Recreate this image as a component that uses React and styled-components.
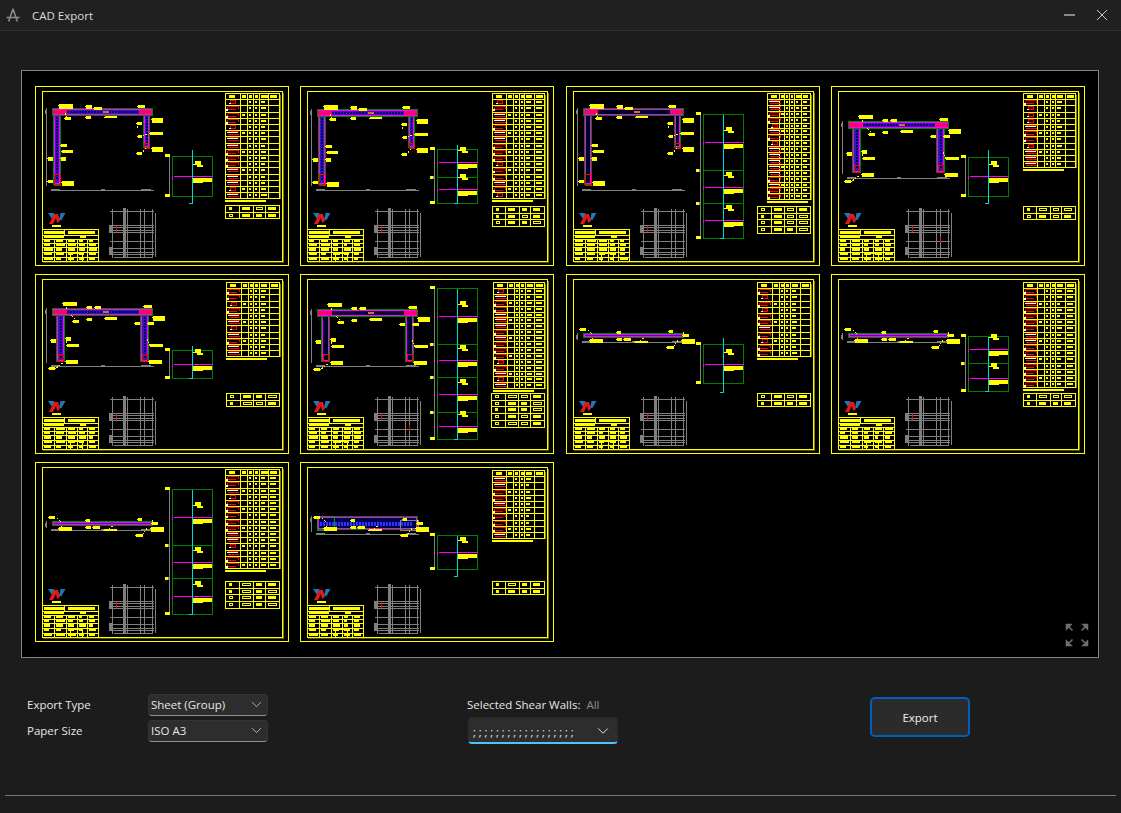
import React from "react";
import styled, { createGlobalStyle } from "styled-components";
import { ChevronDown } from "lucide-react";

const YELLOW = "#ffff00";
const GREEN = "#008000";
const MAGENTA = "#ff00ff";
const CYAN = "#00d8d8";
const RED = "#ff0000";
const GREY = "#808080";

// annotation blobs around the wall plan, [x, y, w, h] in sheet units
const NOTES = {
  L: [
    [24, 18, 14, 4], [51, 19, 6, 3], [59, 21, 8, 2], [103, 19, 7, 2], [117, 32, 11, 4],
    [102, 36, 5, 2], [115, 46, 13, 2], [103, 49, 4, 2], [117, 61, 11, 4], [102, 66, 5, 2],
    [26, 58, 6, 2], [27, 64, 11, 2], [13, 71, 5, 3], [26, 71, 5, 3], [27, 95, 12, 4],
    [13, 94, 5, 2], [30, 31, 6, 2], [51, 30, 5, 2], [70, 30, 12, 1],
  ],
  U: [
    [28, 29, 14, 3], [52, 33, 5, 2], [60, 33, 6, 2], [109, 32, 8, 2], [118, 43, 12, 4],
    [38, 47, 6, 2], [52, 45, 5, 2], [70, 44, 12, 2], [100, 49, 5, 2], [113, 49, 6, 2],
    [16, 66, 5, 3], [31, 64, 5, 3], [32, 71, 12, 2], [115, 71, 13, 2], [31, 87, 12, 3],
    [114, 87, 13, 3], [14, 94, 6, 2],
  ],
  flat: [
    [14, 54, 6, 2], [51, 57, 4, 2], [103, 56, 4, 2], [117, 60, 6, 2], [24, 65, 13, 3],
    [51, 64, 5, 2], [58, 64, 7, 2], [69, 67, 13, 1], [116, 65, 13, 4], [101, 72, 7, 2],
  ],
};

// leader lines from the wall to its notes
const LEADERS = {
  L: ["M105 38 L102 42", "M112 48 L108 50", "M111 62 L107 67", "M30 27 L33 33"],
  U: ["M34 32 L30 37", "M40 46 L36 42", "M28 90 L20 96", "M34 66 L31 70", "M112 66 L115 72"],
  flat: ["M22 56 L26 60", "M112 66 L108 72", "M26 64 L30 68", "M78 64 L74 67", "M118 58 L116 62"],
};

const SHEETS = [
  { plan: "L", planY: 22, legBottom: 99, shortBottom: 62, base: 104, elev: { top: 70, bottom: 110, floors: [], mags: [90], cyan: [63, 117] }, table: { x0: 190, y0: 7, rows: 17 }, small: { x0: 190, y0: 119, rows: 2 }, seed: 11 },
  { plan: "L", planY: 23, legBottom: 99, shortBottom: 62, base: 104, elev: { top: 63, bottom: 117, floors: [91], mags: [76, 103], cyan: [58, 117] }, table: { x0: 192, y0: 7, rows: 17, last: true }, small: { x0: 192, y0: 120, rows: 3 }, seed: 23 },
  { plan: "L", planY: 22, hollow: true, legBottom: 99, shortBottom: 62, base: 104, elev: { top: 28, bottom: 152, floors: [84, 117], mags: [56, 101, 134], cyan: [28, 152] }, table: { x0: 201, y0: 7, rows: 18, rowH: 5.9, last: true }, small: { x0: 191, y0: 120, rows: 4 }, seed: 37 },
  { plan: "U", planY: 35, legBottom: 87, base: 92, elev: { top: 71, bottom: 110, floors: [], mags: [90], cyan: [63, 117] }, table: { x0: 192, y0: 7, rows: 12 }, small: { x0: 192, y0: 120, rows: 2 }, seed: 41, mark: true },
  { plan: "U", planY: 34, legBottom: 88, base: 92, elev: { top: 76, bottom: 104, floors: [], mags: [90], cyan: [71, 104] }, table: { x0: 191, y0: 8, rows: 12 }, small: { x0: 191, y0: 119, rows: 2 }, seed: 53 },
  { plan: "U", planY: 35, hollow: true, legBottom: 88, base: 92, elev: { top: 14, bottom: 165, floors: [70, 103, 138], mags: [42, 86, 120, 152], cyan: [14, 165] }, table: { x0: 193, y0: 8, rows: 18, rowH: 5.9, last: true }, small: { x0: 191, y0: 119, rows: 5 }, seed: 67, mark: true },
  { plan: "flat", planY: 59, planH: 5, base: 68, elev: { top: 70, bottom: 109, floors: [], mags: [90], cyan: [63, 118] }, table: { x0: 191, y0: 8, rows: 12 }, small: { x0: 191, y0: 119, rows: 2 }, seed: 71 },
  { plan: "flat", planY: 59, planH: 5, base: 68, elev: { top: 62, bottom: 117, floors: [89], mags: [75, 104], cyan: [62, 117] }, table: { x0: 192, y0: 8, rows: 17, last: true }, small: { x0: 192, y0: 119, rows: 2 }, seed: 83 },
  { plan: "flat", planY: 59, planH: 5, base: 68, elev: { top: 27, bottom: 152, floors: [83, 116], mags: [55, 100, 134], cyan: [27, 152] }, table: { x0: 190, y0: 7, rows: 16, last: true }, small: { x0: 190, y0: 119, rows: 4 }, seed: 97 },
  { plan: "flat", planY: 54, planH: 14, dark: true, base: 72, elev: { top: 73, bottom: 107, floors: [], mags: [90], cyan: [73, 114] }, table: { x0: 192, y0: 8, rows: 11 }, small: { x0: 192, y0: 119, rows: 2 }, seed: 101 },
];

const makeRng = (seed) => {
  let s = seed * 7919 + 17;
  return () => {
    s = (s * 16807) % 2147483647;
    return (s % 1000) / 1000;
  };
};

const px = (v) => Math.round(v) + 0.5;

const Line = ({ x1, y1, x2, y2, c = YELLOW }) => (
  <line x1={px(x1)} y1={px(y1)} x2={px(x2)} y2={px(y2)} stroke={c} />
);

const Blob = ({ x, y, w, h, c = YELLOW }) => (
  <rect x={Math.round(x)} y={Math.round(y)} width={Math.round(w)} height={Math.round(h)} fill={c} />
);

const Box = ({ x, y, w, h, c = YELLOW, fill = "none" }) => (
  <rect x={px(x)} y={px(y)} width={Math.round(w)} height={Math.round(h)} stroke={c} fill={fill} />
);

const Logo = () => (
  <g shapeRendering="auto">
    <polygon points="13,127 19,127 21,132 17,133" fill="#1c78b8" />
    <polygon points="25.5,127 30.5,127 26.5,134 24,134" fill="#1c78b8" />
    <polygon points="14,138 19,128 23,128 25,135 22,137 21,132 18,138" fill="#e01818" />
    <Blob x={17} y={139} w={9} h={2} />
  </g>
);

const TitleBlock = ({ rng }) => {
  const ys = [143, 149, 153, 157, 161, 166, 171, 175];
  const xs = [7, 19, 31, 42, 52, 63];
  return (
    <g>
      <Box x={7} y={143} w={56} h={32} />
      {ys.slice(1, -1).map((y) => (
        <Line key={y} x1={7} y1={y} x2={63} y2={y} />
      ))}
      {xs.slice(1, -1).map((x) => (
        <Line key={x} x1={x} y1={153} x2={x} y2={175} />
      ))}
      <Line x1={29} y1={143} x2={29} y2={149} />
      <Blob x={9} y={145} w={21} h={3} />
      <Blob x={33} y={145} w={27} h={3} />
      <Blob x={9} y={150} w={20} h={2} />
      <Blob x={45} y={150} w={6} h={2} />
      {ys.slice(2, -1).map((y, r) =>
        xs.slice(0, -1).map((x, i) => (
          <Blob key={`${x}-${y}`} x={x + 2} y={y + 1} w={xs[i + 1] - x - 3 - rng() * 4} h={r === 2 ? 3 : 2} />
        ))
      )}
      <Box x={35} y={167} w={12} h={8} />
    </g>
  );
};

const SteelGrid = ({ mark }) => {
  const vs = [77, 92, 105, 109, 117];
  const hs = [125, 139, 141, 144, 146, 155, 162, 166, 168];
  return (
    <g>
      {vs.map((x) => (
        <Line key={x} x1={x} y1={122} x2={x} y2={171} c={GREY} />
      ))}
      <Blob x={88} y={122} w={3} h={49} c={GREY} />
      <Line x1={120} y1={126} x2={120} y2={170} c={GREY} />
      {hs.map((y) => (
        <Line key={y} x1={74} y1={y} x2={118} y2={y} c={GREY} />
      ))}
      <Blob x={74} y={139} w={3} h={8} c={GREY} />
      <Blob x={74} y={161} w={3} h={8} c={GREY} />
      <Line x1={78} y1={171} x2={116} y2={171} c={GREY} />
      <Line x1={81} y1={139} x2={81} y2={145} c={RED} />
      {mark && <Line x1={109} y1={150} x2={109} y2={156} c={RED} />}
    </g>
  );
};

const wallFill = (s) => (s.hollow ? "#000030" : s.dark ? "#000050" : "#3a14b8");

const WallBar = ({ x, y, w, h, s, horizontal }) => {
  const dots = horizontal ? Math.floor((w - 6) / 3) : Math.floor((h - 6) / 3);
  return (
    <g>
      <Blob x={x} y={y} w={w} h={h} c={GREEN} />
      <Blob x={x + 1} y={y + 1} w={w - 2} h={h - 2} c={MAGENTA} />
      {h > 4 && w > 4 && <Blob x={x + 2} y={y + 2} w={w - 4} h={h - 4} c={wallFill(s)} />}
      {!s.hollow &&
        h > 5 &&
        Array.from({ length: dots }, (_, i) =>
          horizontal ? (
            <Blob key={i} x={x + 3 + i * 3} y={y + h / 2 - 1} w={2} h={s.dark ? 4 : 2} c={s.dark ? "#3030ff" : "#000070"} />
          ) : (
            <Blob key={i} x={x + w / 2 - 1} y={y + 3 + i * 3} w={2} h={2} c="#000070" />
          )
        )}
    </g>
  );
};

const Plan = ({ s }) => {
  const top = s.planY;
  const h = s.planH || 8;
  const dimBottom = s.plan === "flat" ? top + h + 1 : s.legBottom;
  const dy = s.plan === "flat" ? 0 : s.plan === "L" ? top - 22 : top - 35;
  return (
    <g>
      <Line x1={11} y1={top - 1} x2={11} y2={dimBottom} c={GREY} />
      <Blob x={10} y={top + 2} w={2} h={4} c={GREY} />
      <Line x1={15} y1={s.base} x2={118} y2={s.base} c={GREY} />
      <Blob x={16} y={s.base - 1} w={9} h={1} c={GREY} />
      <Blob x={66} y={s.base - 1} w={4} h={1} c={GREY} />
      <Blob x={106} y={s.base - 1} w={10} h={1} c={GREY} />
      {s.plan === "L" && (
        <>
          <WallBar x={18} y={top + 6} w={8} h={s.legBottom - top - 6} s={s} />
          <WallBar x={108} y={top + 6} w={7} h={s.shortBottom - top - 6} s={s} />
          <Box x={19} y={s.legBottom - 11} w={6} h={11} c={RED} />
          <Box x={109} y={s.shortBottom - 5} w={5} h={5} c={RED} />
        </>
      )}
      {s.plan === "U" && (
        <>
          <WallBar x={21} y={top + 6} w={9} h={s.legBottom - top - 6} s={s} />
          <WallBar x={105} y={top + 6} w={9} h={s.legBottom - top - 6} s={s} />
          <Box x={23} y={s.legBottom - 8} w={5} h={7} c={RED} />
          <Box x={107} y={s.legBottom - 8} w={5} h={7} c={RED} />
        </>
      )}
      <WallBar x={17} y={top} w={101} h={h} s={s} horizontal />
      {s.plan !== "flat" && (
        <>
          <Blob x={18} y={top + 2} w={14} h={4} c="#ff0070" />
          <Blob x={104} y={top + 2} w={13} h={4} c="#ff0070" />
          <Blob x={68} y={top + 3} w={6} h={2} c="#d07030" />
        </>
      )}
      {s.dark && (
        <>
          <Box x={17} y={top} w={17} h={h} c="#00a000" />
          <Box x={100} y={top + 4} w={18} h={h - 4} c={GREY} />
        </>
      )}
      {NOTES[s.plan].map(([x, y, w, n], i) => (
        <g key={i}>
          <Blob x={x} y={y + dy} w={w} h={n + 1} />
          <Blob x={x - 1} y={y + dy + 1} w={2} h={1} />
        </g>
      ))}
      <g transform={`translate(0 ${dy})`} fill="none" stroke={YELLOW} strokeDasharray="2 1">
        {LEADERS[s.plan].map((d) => (
          <path key={d} d={d} />
        ))}
      </g>
    </g>
  );
};

const Elevation = ({ e }) => {
  const x0 = 137;
  const x1 = 177;
  const cx = 157;
  return (
    <g>
      <Line x1={x0 - 3} y1={e.top} x2={x0 - 3} y2={e.bottom} c={GREY} />
      <Blob x={x0 - 7} y={e.top - 2} w={5} h={3} />
      <Blob x={x0 - 7} y={e.bottom - 2} w={5} h={3} />
      <Box x={x0} y={e.top} w={x1 - x0} h={e.bottom - e.top} c={GREEN} />
      {e.floors.map((y) => (
        <React.Fragment key={y}>
          <Line x1={x0} y1={y} x2={x1} y2={y} c={GREEN} />
          <Blob x={x0 - 7} y={y - 1} w={4} h={3} />
          <Blob x={x0 - 4} y={y - 1} w={2} h={3} c={GREY} />
        </React.Fragment>
      ))}
      {e.mags.map((y) => (
        <React.Fragment key={y}>
          <Line x1={x0 + 1} y1={y} x2={x1} y2={y} c={MAGENTA} />
          <Blob x={x0} y={y} w={1} h={3} c={MAGENTA} />
          <Blob x={cx + 1} y={y + 2} w={19} h={4} />
          <Blob x={cx + 1} y={y + 6} w={10} h={1} />
          <Blob x={cx + 3} y={y - 15} w={6} h={4} />
          <Blob x={cx + 5} y={y - 11} w={6} h={2} />
          <Blob x={cx + 1} y={y - 12} w={2} h={1} />
        </React.Fragment>
      ))}
      <Line x1={cx} y1={e.cyan[0]} x2={cx} y2={e.cyan[1]} c={CYAN} />
      <Line x1={cx - 4} y1={e.cyan[1]} x2={cx} y2={e.cyan[1]} c={CYAN} />
    </g>
  );
};

const COLS = [0, 0.28, 0.41, 0.52, 0.63, 0.81, 1];

const WallGlyph = ({ x, y, kind }) => {
  if (kind < 0.5) {
    return (
      <>
        <Line x1={x + 2} y1={y + 1} x2={x + 13} y2={y + 1} c={RED} />
        <Line x1={x + 2} y1={y + 4} x2={x + 10} y2={y + 4} c={RED} />
        <Line x1={x + 13} y1={y + 1} x2={x + 13} y2={y + 3} c={RED} />
        <Line x1={x + 2} y1={y + 1} x2={x + 2} y2={y + 3} c={RED} />
        <Blob x={x + 1} y={y + 4} w={2} h={2} c="#fff" />
      </>
    );
  }
  if (kind < 0.72) {
    return (
      <>
        <Box x={x + 5} y={y + 1} w={5} h={3} c={RED} />
        <Blob x={x + 4} y={y + 4} w={2} h={1} c="#fff" />
      </>
    );
  }
  return (
    <>
      <Line x1={x + 2} y1={y + 1} x2={x + 13} y2={y + 1} c={RED} />
      <Blob x={x + 2} y={y + 2} w={11} h={1} c="#fff" />
      <Line x1={x + 2} y1={y + 4} x2={x + 13} y2={y + 4} c={RED} />
    </>
  );
};

const Schedule = ({ t, rng }) => {
  const rowH = t.rowH || 6.2;
  const x1 = 243.5;
  const w = x1 - t.x0;
  const colX = COLS.map((c) => t.x0 + c * w);
  const bottom = t.y0 + t.rows * rowH;
  return (
    <g>
      <Line x1={x1 + 1} y1={t.y0 + 1} x2={x1 + 1} y2={bottom} c="#808000" />
      <Box x={t.x0} y={t.y0} w={w} h={bottom - t.y0} />
      {Array.from({ length: t.rows - 1 }, (_, i) => (
        <Line key={i} x1={t.x0} y1={t.y0 + (i + 1) * rowH} x2={x1} y2={t.y0 + (i + 1) * rowH} />
      ))}
      {colX.slice(1, -1).map((x) => (
        <Line key={x} x1={x} y1={t.y0} x2={x} y2={bottom} />
      ))}
      <Blob x={t.x0 + 4} y={t.y0 + 2} w={6} h={3} />
      {colX.slice(1, -1).map((x, i) => (
        <Blob key={x} x={x + 2} y={t.y0 + 2} w={colX[i + 2] - x - 3} h={3} />
      ))}
      {Array.from({ length: t.rows - 1 }, (_, r) => {
        const y = Math.round(t.y0 + (r + 1) * rowH);
        return (
          <g key={r}>
            <WallGlyph x={t.x0} y={y} kind={rng()} />
            {colX.slice(2, 5).map((x, i) => (
              <Blob key={i} x={x + 2} y={y + 2} w={Math.max(2, colX[i + 3] - x - 4 - rng() * 2)} h={2} />
            ))}
            {t.last && <Blob x={colX[5] + 2} y={y + 2} w={colX[6] - colX[5] - 4} h={2} />}
            {r % 3 === 2 && <Blob x={colX[1] + 2} y={y + 2} w={3} h={2} />}
          </g>
        );
      })}
      <Blob x={t.x0} y={bottom + 2} w={41} h={2} />
    </g>
  );
};

const SmallTable = ({ t, rng }) => {
  const w = 243.5 - t.x0;
  const rowH = 6.7;
  const xs = [0, 0.26, 0.52, 0.74, 1].map((c) => t.x0 + c * w);
  return (
    <g>
      <Box x={t.x0} y={t.y0} w={w} h={t.rows * rowH} />
      {Array.from({ length: t.rows - 1 }, (_, i) => (
        <Line key={i} x1={t.x0} y1={t.y0 + (i + 1) * rowH} x2={243.5} y2={t.y0 + (i + 1) * rowH} />
      ))}
      {xs.slice(1, -1).map((x) => (
        <Line key={x} x1={x} y1={t.y0} x2={x} y2={t.y0 + t.rows * rowH} />
      ))}
      {Array.from({ length: t.rows }, (_, r) =>
        xs.slice(0, -1).map((x, i) => {
          const cw = i === 0 ? 3 : xs[i + 1] - x - 6;
          const cellX = x + (i === 0 ? 4 : 3);
          const cellY = t.y0 + r * rowH + 2;
          return rng() < 0.5 ? (
            <Box key={`${r}-${i}`} x={cellX} y={cellY} w={cw} h={2} />
          ) : (
            <Blob key={`${r}-${i}`} x={cellX} y={cellY} w={cw} h={3} />
          );
        })
      )}
    </g>
  );
};

const Sheet = ({ s }) => {
  const rng = makeRng(s.seed);
  return (
    <SheetSvg viewBox="0 0 254 180" shapeRendering="crispEdges">
      <Line x1={248} y1={6} x2={248} y2={176} c="#808000" />
      <Line x1={7} y1={176} x2={248} y2={176} c="#505000" />
      <Box x={0} y={0} w={253} h={179} />
      <Box x={7} y={5} w={240} h={170} />
      <Plan s={s} />
      <Elevation e={s.elev} />
      <Schedule t={s.table} rng={rng} />
      <SmallTable t={s.small} rng={rng} />
      <Logo />
      <TitleBlock rng={rng} />
      <SteelGrid mark={s.mark} />
    </SheetSvg>
  );
};

const FitIcon = () => (
  <ExpandIcon viewBox="0 0 24 24" fill="#707070" stroke="#707070" strokeWidth="1.5">
    <path d="M1.5 1.5h4.5L1.5 6z M2 2l5.5 5.5" />
    <path d="M22.5 1.5H18l4.5 4.5z M22 2l-5.5 5.5" />
    <path d="M1.5 22.5H6l-4.5-4.5z M2 22l5.5-5.5" />
    <path d="M22.5 22.5H18l4.5-4.5z M22 22l-5.5-5.5" />
  </ExpandIcon>
);

const AppIcon = () => (
  <IconSvg viewBox="0 0 14 14" fill="none" stroke="#8c8c8c" strokeWidth="1.5">
    <path d="M7 0.5v2.5M6.3 3 2.6 13.5M7.7 3l3.7 10.5M0.5 9.5h13" />
    <circle cx="7" cy="3" r="1.4" fill="#8c8c8c" stroke="none" />
  </IconSvg>
);

const App = () => {
  return (
    <Page>
      <GlobalStyle />
      <TitleBar>
        <AppIcon />
        <Title>CAD Export</Title>
        <WindowButtons>
          <svg width="11" height="2" viewBox="0 0 11 2">
            <path d="M0 1h11" stroke="#f0f0f0" />
          </svg>
          <svg width="12" height="12" viewBox="0 0 12 12">
            <path d="M1 1l10 10M11 1L1 11" stroke="#c8c8c8" />
          </svg>
        </WindowButtons>
      </TitleBar>

      <Canvas>
        <SheetGrid>
          {SHEETS.map((s) => (
            <Sheet key={s.seed} s={s} />
          ))}
        </SheetGrid>
        <FitIcon />
      </Canvas>

      <Footer>
        <Fields>
          <Label>Export Type</Label>
          <Select>
            <span>Sheet (Group)</span>
            <ChevronDown size={17} strokeWidth={1} />
          </Select>
          <Label>Paper Size</Label>
          <Select>
            <span>ISO A3</span>
            <ChevronDown size={17} strokeWidth={1} />
          </Select>
        </Fields>
        <WallsGroup>
          <WallsHead>
            <Label>Selected Shear Walls:</Label>
            <Muted>All</Muted>
          </WallsHead>
          <WallSelect>
            <span>{"; ".repeat(18)}</span>
            <ChevronDown size={18} strokeWidth={1.3} />
          </WallSelect>
        </WallsGroup>
        <ExportButton>Export</ExportButton>
      </Footer>

      <Divider />
    </Page>
  );
};

const GlobalStyle = createGlobalStyle`
  html, body {
    margin: 0;
    padding: 0;
    background: #1c1c1c;
  }
  * {
    box-sizing: border-box;
  }
`;

const Page = styled.div`
  width: 1121px;
  height: 813px;
  display: flex;
  flex-direction: column;
  overflow: hidden;
  background: #1c1c1c;
  color: #e6e6e6;
  font-family: "Open Sans", "Noto Sans", sans-serif;
  font-size: 11.5px;
`;

const TitleBar = styled.div`
  height: 31px;
  flex: none;
  display: flex;
  align-items: center;
  padding: 0 13px 0 6px;
  background: #202020;
  border-bottom: 1px solid #303030;
`;

const IconSvg = styled.svg`
  width: 14px;
  height: 14px;
`;

const Title = styled.div`
  margin-left: 12px;
  color: #dcdcdc;
`;

const WindowButtons = styled.div`
  margin-left: auto;
  display: flex;
  align-items: center;
  gap: 21px;
`;

const Canvas = styled.div`
  position: relative;
  flex: none;
  height: 588px;
  margin: 39px 22px 0 21px;
  padding: 15px 13px;
  background: #000;
  border: 1px solid #858585;
`;

const SheetGrid = styled.div`
  display: grid;
  grid-template-columns: 265px 266px 265px 254px;
  grid-auto-rows: 180px;
  row-gap: 8px;
`;

const SheetSvg = styled.svg`
  display: block;
  width: 254px;
  height: 180px;
`;

const ExpandIcon = styled.svg`
  position: absolute;
  right: 9px;
  bottom: 10px;
  width: 24px;
  height: 24px;
`;

const Footer = styled.div`
  flex: none;
  display: flex;
  align-items: flex-start;
  margin-top: 36px;
  padding-left: 27px;
`;

const Fields = styled.div`
  display: grid;
  grid-template-columns: 121px 120px;
  grid-auto-rows: 22px;
  row-gap: 4px;
  align-items: center;
`;

const Label = styled.div`
  color: #e6e6e6;
  white-space: nowrap;
  padding-bottom: 1px;
`;

const Muted = styled.div`
  color: #8c8c8c;
  padding-bottom: 1px;
`;

const Select = styled.div`
  height: 22px;
  display: flex;
  align-items: center;
  justify-content: space-between;
  padding: 0 2px 1px 2px;
  background: #2d2d2d;
  border: 1px solid #333;
  border-bottom-color: #8f8f8f;
  border-radius: 4px;
  color: #e6e6e6;
`;

const WallsGroup = styled.div`
  width: 151px;
  margin-left: 199px;
  display: flex;
  flex-direction: column;
  gap: 1px;
`;

const WallsHead = styled.div`
  height: 22px;
  display: flex;
  align-items: center;
  gap: 6px;
`;

const WallSelect = styled(Select)`
  height: 27px;
  margin-left: 1px;
  padding: 2px 5px 0 4px;
  border-color: #2a2a2a;
  border-bottom: 2px solid #4cc2ff;
  font-size: 11px;
  white-space: pre;
  overflow: hidden;
`;

const ExportButton = styled.button`
  width: 100px;
  height: 40px;
  margin: 3px 0 0 252px;
  background: #2b2b2b;
  border: 2px solid #0060b8;
  border-radius: 5px;
  color: #f0f0f0;
  font: inherit;
`;

const Divider = styled.div`
  height: 1px;
  margin: auto 5px 17px;
  background: #767676;
`;

export default App;
